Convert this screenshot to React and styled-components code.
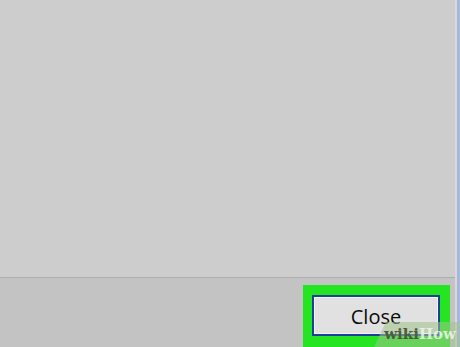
import React from "react";
import styled, { createGlobalStyle } from "styled-components";

const Global = createGlobalStyle`
  html, body { margin: 0; padding: 0; }
  body { width: 460px; height: 347px; overflow: hidden; background: #cdcdcd; }
`;

const Frame = styled.div`
  position: relative;
  width: 460px;
  height: 347px;
  display: flex;
  overflow: hidden;
`;

const Content = styled.div`
  flex: 1;
  display: flex;
  flex-direction: column;
`;

const Main = styled.div`
  height: 277px;
  background: #cdcdcd;
`;

const Separator = styled.div`
  height: 1px;
  background: #adadad;
`;

const Footer = styled.div`
  flex: 1;
  background: #c3c3c3;
  display: flex;
  justify-content: flex-end;
  align-items: flex-start;
  padding: 7px 5px 0 0;
  overflow: hidden;
`;

const Highlight = styled.div`
  width: 147px;
  height: 70px;
  background: #25e523;
  box-sizing: border-box;
  padding: 10px 10px 0 9px;
`;

const Button = styled.button`
  width: 128px;
  height: 41px;
  box-sizing: border-box;
  border: 2px solid #1d3f9c;
  box-shadow: inset 0 0 0 1px #f4f4f4;
  background: #e1e1e1;
  color: #0a0a0a;
  font-family: "Open Sans", "Noto Sans", sans-serif;
  font-weight: 400;
  font-size: 20px;
  padding: 2px 0 0 0;
  display: flex;
  align-items: center;
  justify-content: center;
`;

const EdgeLight = styled.div`
  width: 2px;
  background: #d9d9d9;
`;

const EdgeBlue = styled.div`
  width: 3px;
  background: #a6b6dc;
`;

const Watermark = styled.div`
  position: absolute;
  right: 0;
  bottom: 0;
  width: 86px;
  height: 25px;
  background: rgba(160, 195, 140, 0.55);
  clip-path: polygon(12px 0, 100% 0, 100% 100%, 0 100%);
  display: flex;
  align-items: flex-end;
  justify-content: flex-end;
  padding: 0 4px 5px 0;
  box-sizing: border-box;
  font-family: "DejaVu Serif", "Liberation Serif", serif;
  font-weight: bold;
  font-size: 15px;
  line-height: 1;
`;

const Wiki = styled.span`
  color: #4a5e3c;
`;

const How = styled.span`
  color: rgba(238, 246, 232, 0.85);
`;

export default function App() {
  return (
    <Frame>
      <Global />
      <Content>
        <Main />
        <Separator />
        <Footer>
          <Highlight>
            <Button>Close</Button>
          </Highlight>
        </Footer>
      </Content>
      <EdgeLight />
      <EdgeBlue />
      <Watermark>
        <Wiki>wiki</Wiki>
        <How>How</How>
      </Watermark>
    </Frame>
  );
}
